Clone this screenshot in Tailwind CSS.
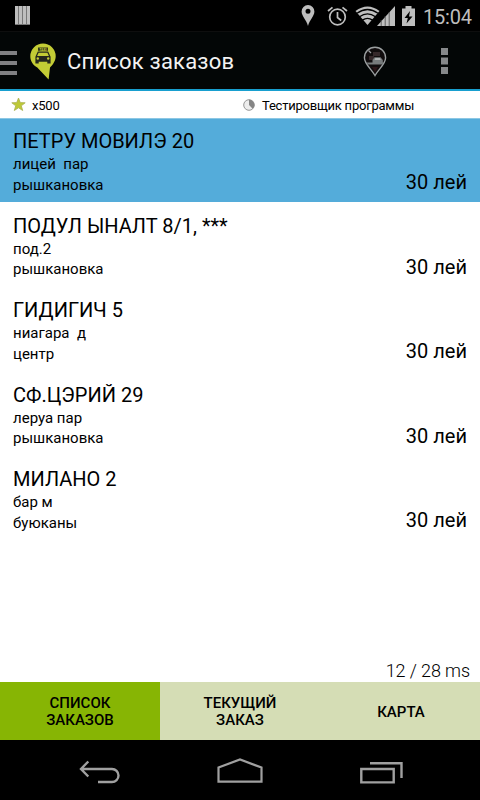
<!DOCTYPE html>
<html lang="ru">
<head>
  <meta charset="UTF-8" />
  <meta name="viewport" content="width=device-width, initial-scale=1.0" />
  <title>Список заказов</title>
  <script src="https://cdn.jsdelivr.net/npm/@tailwindcss/browser@4"></script>
</head>
<body class="bg-white text-black font-['Roboto',sans-serif]">
  <div class="w-[480px] h-[800px] flex flex-col overflow-hidden">

    <!-- Status bar -->
    <div class="h-[31px] shrink-0 bg-black flex items-center pl-[15px] pr-[7px] text-[#bebebe]">
      <svg class="w-[15px] h-[19px]" viewBox="0 0 15 19" fill="currentColor">
        <path d="M0 0h15v19H0z" fill="#777" />
        <path d="M0 0h3v18H0zM4 0h3v18H4zM8 0h3v18H8zM12 0h3v18h-3z" />
      </svg>
      <svg class="ml-auto w-[14px] h-[21px]" viewBox="0 0 14 21" fill="currentColor">
        <path fill-rule="evenodd" d="M7 0a6.4 6.4 0 0 1 6.4 6.5C13.4 11 8.5 15 7 21 5.500 15 .6 11 .6 6.500A6.400 6.400 0 0 1 7 0zm0 3.800a2.500 2.500 0 1 0 0 5 2.500 2.500 0 0 0 0-5z" />
      </svg>
      <svg class="ml-3 w-[21px] h-5" viewBox="0 0 21 20" fill="none" stroke="currentColor" stroke-width="1.7">
        <circle cx="10.500" cy="11" r="7.800" />
        <path d="M10.500 6v5.500l3.700 3M1 5l4.500-3.700M20 5l-4.500-3.700" />
      </svg>
      <svg class="ml-[7px] w-[40px] h-5" viewBox="0 0 40 20">
        <path d="M.5 5Q12.500-4 24.500 5L12.500 19z" fill="currentColor" />
        <path d="M2 7.200Q12.500-.2 23 7.200M4.500 10.700Q12.500 5 20.500 10.700M7.400 14.100Q12.500 10.500 17.600 14.100" fill="none" stroke="#000" stroke-width="1.300" />
        <path d="M22 20L40 0v20z" fill="currentColor" />
        <path d="M26.200 14v6M30.200 10v10M34.200 6v14" stroke="#555" stroke-width=".9" />
      </svg>
      <svg class="ml-[7px] w-[13px] h-5" viewBox="0 0 13 20" fill="currentColor">
        <path d="M3.500 0h6v2.500H13V20H0V2.500h3.500z" />
        <path d="M8 5L2.500 12h3.300L4.500 17.500l6-7H7z" fill="#000" />
      </svg>
      <span class="ml-2 w-[50px] pt-[2px] text-[20px] leading-none whitespace-nowrap tracking-[-0.2px]">15:04</span>
    </div>

    <!-- Action bar -->
    <div class="h-[60px] shrink-0 bg-[#030606] border-t border-t-[#0e0e0e] border-b-2 border-b-[#189fcf] flex items-center text-[#f3f3f3]">
      <svg class="mt-1 w-[17px] h-[25px]" viewBox="0 0 17 25" fill="#808083">
        <path d="M0 1h17v4H0zM0 11h17v4H0zM0 21h17v4H0z" />
      </svg>
      <svg class="ml-[13px] mt-px w-[26px] h-[37px]" viewBox="0 0 26 37">
        <path d="M13 .5A12.700 12.700 0 0 1 25.700 13.200C25.700 18 22.500 22 20 24.500L18.600 36.500 7.300 24.500C3 22 .3 18 .3 13.200A12.700 12.700 0 0 1 13 .5z" fill="#c3cc35" />
        <path d="M8 4.500h10v3.300H8z" fill="#34361a" />
        <text x="13" y="7.500" text-anchor="middle" font-size="3.200" font-weight="bold" font-family="Roboto" fill="#c3cc35">TAXI</text>
        <path d="M7.800 8.500h10.400l2.400 5.300v6.700h-3.300v-1.700H8.700v1.700H5.400v-6.700z" fill="#25271d" />
        <path d="M8.600 9.700h8.800l1.500 3.300H7.100z" fill="#c3cc35" />
        <circle cx="7.800" cy="15.500" r="1.200" fill="#c3cc35" />
        <circle cx="18.200" cy="15.500" r="1.200" fill="#c3cc35" />
      </svg>
      <h1 class="ml-[11px] pt-[3px] text-[22px] leading-none whitespace-nowrap tracking-[0.2px]">Список заказов</h1>
      <svg class="ml-auto mt-px w-6 h-[31px]" viewBox="0 0 24 31">
        <path d="M12 1.200A10.600 10.600 0 0 1 22.600 11.800C22.600 18 16 22.500 12 29.500 8 22.500 1.400 18 1.400 11.800A10.600 10.600 0 0 1 12 1.200z" fill="#100c0d" stroke="#9b9fa0" stroke-width="1.400" />
        <path d="M5.500 4.500l2.500 2.500" stroke="#9b9fa0" stroke-width="1.200" />
        <path d="M10 6h7v4h-7zM6 10h5v4H6z" fill="#35282a" />
        <path d="M3.500 16.500h6v-2.500l2-2.800h6l2.300 2.800v2.500h.7l-1.200 2H5z" fill="#777b7c" />
        <path d="M11.500 13.800l.8-1.500h4.500l1 1.500z" fill="#bfc2c3" />
        <path d="M9 21h6l-3 5z" fill="#2a1517" />
      </svg>
      <svg class="ml-[54px] mt-px mr-[32px] w-[7px] h-[26px]" viewBox="0 0 7 26" fill="#86888a">
        <path d="M0 0h7v7H0zM0 9.500h7v7H0zM0 19h7v7H0z" />
      </svg>
    </div>

    <!-- Driver info -->
    <div class="h-7 shrink-0 border-b border-[#8cc7e4] grid grid-cols-2 text-[13px] leading-none">
      <div class="flex items-center pl-[11px] gap-[6px]">
        <svg class="w-[15px] h-[15px]" viewBox="0 0 15 15">
          <path d="M7.500 1l1.800 4.600 4.900.2-3.900 3 1.400 4.700-4.200-2.700-4.200 2.700 1.400-4.700-3.900-3 4.900-.2z" fill="#bec936" stroke="#a9b052" stroke-width=".8" />
        </svg>
        <span class="pt-[2px] tracking-[-0.2px]">x500</span>
      </div>
      <div class="flex items-center pl-[3px] gap-[7px]">
        <svg class="w-3 h-3" viewBox="0 0 12 12">
          <circle cx="6" cy="6" r="5.300" fill="#ededed" stroke="#969696" />
          <path d="M6 6V.8A5.200 5.200 0 0 1 9.700 9.700z" fill="#858585" />
        </svg>
        <span class="pt-[2px] whitespace-nowrap tracking-[-0.22px]">Тестировщик программы</span>
      </div>
    </div>

    <!-- Orders -->
    <ul class="grow flex flex-col gap-[1.5px] leading-none">
      <li class="h-[83px] shrink-0 bg-[#54acda] flex justify-between pl-[13px] pr-[13px]">
        <div class="pt-[12px]">
          <p class="text-[20px]">ПЕТРУ МОВИЛЭ 20</p>
          <p class="mt-[6px] text-[15px] whitespace-pre">лицей  пар</p>
          <p class="mt-[5.5px] text-[15px]">рышкановка</p>
        </div>
        <p class="pt-[53px] text-[20px]">30 лей</p>
      </li>
      <li class="h-[83px] shrink-0 flex justify-between pl-[13px] pr-[13px]">
        <div class="pt-[12px]">
          <p class="text-[20px]">ПОДУЛ ЫНАЛТ 8/1, ***</p>
          <p class="mt-[6px] text-[15px]">под.2</p>
          <p class="mt-[5.5px] text-[15px]">рышкановка</p>
        </div>
        <p class="pt-[53px] text-[20px]">30 лей</p>
      </li>
      <li class="h-[83px] shrink-0 flex justify-between pl-[13px] pr-[13px]">
        <div class="pt-[12px]">
          <p class="text-[20px]">ГИДИГИЧ 5</p>
          <p class="mt-[6px] text-[15px] whitespace-pre">ниагара  д</p>
          <p class="mt-[5.5px] text-[15px]">центр</p>
        </div>
        <p class="pt-[53px] text-[20px]">30 лей</p>
      </li>
      <li class="h-[83px] shrink-0 flex justify-between pl-[13px] pr-[13px]">
        <div class="pt-[12px]">
          <p class="text-[20px]">СФ.ЦЭРИЙ 29</p>
          <p class="mt-[6px] text-[15px]">леруа пар</p>
          <p class="mt-[5.5px] text-[15px]">рышкановка</p>
        </div>
        <p class="pt-[53px] text-[20px]">30 лей</p>
      </li>
      <li class="h-[83px] shrink-0 flex justify-between pl-[13px] pr-[13px]">
        <div class="pt-[12px]">
          <p class="text-[20px]">МИЛАНО 2</p>
          <p class="mt-[6px] text-[15px]">бар м</p>
          <p class="mt-[5.5px] text-[15px]">буюканы</p>
        </div>
        <p class="pt-[53px] text-[20px]">30 лей</p>
      </li>
    </ul>

    <p class="shrink-0 pr-[10px] pb-[2px] text-right text-[18px] leading-none font-light tracking-[-0.1px]">12 / 28 ms</p>

    <!-- Tabs -->
    <div class="h-[58px] shrink-0 grid grid-cols-3 bg-[#d5ddb5] text-center text-[15px] leading-[17.5px] font-medium">
      <button class="pt-[2px] bg-[#87b504]">СПИСОК<br>ЗАКАЗОВ</button>
      <button class="pt-[2px]">ТЕКУЩИЙ<br>ЗАКАЗ</button>
      <button class="pt-[3px] pl-[2px]">КАРТА</button>
    </div>

    <!-- Navigation bar -->
    <div class="h-[60px] shrink-0 bg-black flex items-center pl-[79px] text-[#a0a0a0]">
      <svg class="mt-[3px] w-[42px] h-[24px]" viewBox="0 0 42 24" fill="none" stroke="currentColor" stroke-width="2.4">
        <path d="M9.300 1.500L2 9l7.300 7.500M1.500 9H33a6.500 6.500 0 0 1 0 13H19" />
      </svg>
      <svg class="ml-[96px] mt-[2px] w-[46px] h-[26px]" viewBox="0 0 46 26" fill="none" stroke="currentColor" stroke-width="2.2">
        <path d="M1.500 23.600V9.500L23 1.500l21.500 8v14.100z" />
      </svg>
      <svg class="ml-[97px] mt-[4px] w-[43px] h-[23px]" viewBox="0 0 43 23" fill="none" stroke="currentColor" stroke-width="2.4">
        <path d="M1.300 8h32.400v13.400H1.300zM10 2.300h31.500V17" />
      </svg>
    </div>
  </div>
</body>
</html>
